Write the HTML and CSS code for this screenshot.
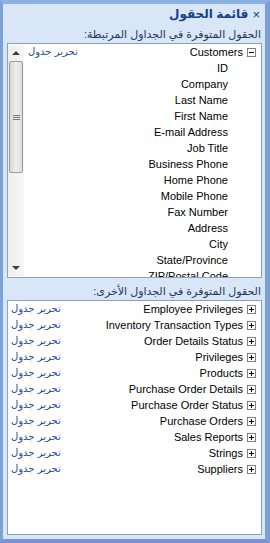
FILE: index.html
```html
<!DOCTYPE html>
<html lang="ar" dir="rtl">
<head>
    <meta charset="UTF-8">
    <title>قائمة الحقول</title>
    <link rel="stylesheet" href="styles.css">
</head>
<body>
<div class="pane">
    <div class="titlebar">
        <span class="close">×</span>
        <span class="title">قائمة الحقول</span>
    </div>

    <div class="label">الحقول المتوفرة في الجداول المرتبطة:</div>
    <div class="box box-top">
        <div class="list">
            <div class="row table">
                <svg class="toggle" width="9" height="9" viewBox="0 0 9 9"><rect x="0.5" y="0.5" width="8" height="8" fill="#fff" stroke="#808080"/><path d="M2 4.5h5" stroke="#000"/></svg>
                <span class="name">Customers</span>
                <a class="edit" href="#">تحرير جدول</a>
            </div>
            <div class="row field">ID</div>
            <div class="row field">Company</div>
            <div class="row field">Last Name</div>
            <div class="row field">First Name</div>
            <div class="row field">E-mail Address</div>
            <div class="row field">Job Title</div>
            <div class="row field">Business Phone</div>
            <div class="row field">Home Phone</div>
            <div class="row field">Mobile Phone</div>
            <div class="row field">Fax Number</div>
            <div class="row field">Address</div>
            <div class="row field">City</div>
            <div class="row field">State/Province</div>
            <div class="row field">ZIP/Postal Code</div>
        </div>
        <div class="scrollbar">
            <div class="arrow up"></div>
            <div class="track">
                <div class="thumb"><span class="grip"></span></div>
            </div>
            <div class="arrow down"></div>
        </div>
    </div>

    <div class="label">الحقول المتوفرة في الجداول الأخرى:</div>
    <div class="box box-bottom">
        <div class="list" id="otherTables"></div>
    </div>
</div>

<script>
    // الجداول الأخرى
    const tables = [
        'Employee Privileges', 'Inventory Transaction Types', 'Order Details Status',
        'Privileges', 'Products', 'Purchase Order Details', 'Purchase Order Status',
        'Purchase Orders', 'Sales Reports', 'Strings', 'Suppliers'
    ];
    document.getElementById('otherTables').innerHTML = tables.map(t => `
        <div class="row table">
            <svg class="toggle" width="9" height="9" viewBox="0 0 9 9"><rect x="0.5" y="0.5" width="8" height="8" fill="#fff" stroke="#808080"/><path d="M2 4.5h5M4.5 2v5" stroke="#000"/></svg>
            <span class="name">${t}</span>
            <a class="edit" href="#">تحرير جدول</a>
        </div>
    `).join('');
</script>
</body>
</html>
```

FILE: styles.css
```css
body {
    margin: 0;
    font-family: "Liberation Sans", "DejaVu Sans", sans-serif;
    font-size: 11px;
    background: #d6e4f6;
}
.pane {
    height: 543px;
    box-sizing: border-box;
    border-top: 4px solid #8cb1e2;
    border-left: 3px solid #7ca1d8;
    border-right: 5px solid #7ca1d8;
    border-bottom: 4px solid #7b93d6;
    background: #d8e6f8;
    padding: 0 3px 0 4px;
}
.titlebar {
    display: flex;
    align-items: center;
    height: 20px;
    padding-right: 2px;
    color: #15428b;
}
.close {
    font-size: 13px;
    margin-left: 4px;
}
.title {
    font-weight: bold;
    font-size: 12px;
}
.label {
    height: 19px;
    line-height: 21px;
    color: #1e395b;
    padding-right: 1px;
}
.box {
    display: flex;
    background: #fff;
    border: 1px solid #8ba0bc;
    overflow: hidden;
}
.box-top {
    height: 233px;
    margin-bottom: 3px;
}
.box-bottom {
    height: 233px;
}
.list {
    flex: 1;
}
.row {
    height: 16px;
    line-height: 16px;
    color: #000;
    white-space: nowrap;
}
.row.field {
    padding-right: 33px;
}
.row.table {
    display: flex;
    align-items: center;
    padding-right: 5px;
}
.toggle {
    margin-left: 4px;
}
.edit {
    margin-right: auto;
    margin-left: 3px;
    color: #1c4a9c;
    text-decoration: none;
    font-family: "DejaVu Sans", sans-serif;
    font-size: 10px;
}
.scrollbar {
    width: 16px;
    margin: 1px 1px 1px 0;
    display: flex;
    flex-direction: column;
    background: linear-gradient(to right, #eeeeee, #f6f6f6);
}
.arrow {
    height: 16px;
    display: flex;
    align-items: center;
    justify-content: center;
}
.arrow::before {
    content: "";
    border-left: 4px solid transparent;
    border-right: 4px solid transparent;
}
.arrow.up::before {
    border-bottom: 4px solid #3f3f3f;
}
.arrow.down::before {
    border-top: 4px solid #3f3f3f;
}
.track {
    flex: 1;
}
.thumb {
    height: 110px;
    margin: 0 1px;
    border: 1px solid #9a9a9a;
    border-radius: 2px;
    background: linear-gradient(to right, #d8d8d8, #efefef 50%, #dcdcdc);
    display: flex;
    align-items: center;
    justify-content: center;
}
.grip {
    width: 7px;
    height: 5px;
    background: repeating-linear-gradient(to bottom, #777 0 1px, transparent 1px 2px);
}
```
